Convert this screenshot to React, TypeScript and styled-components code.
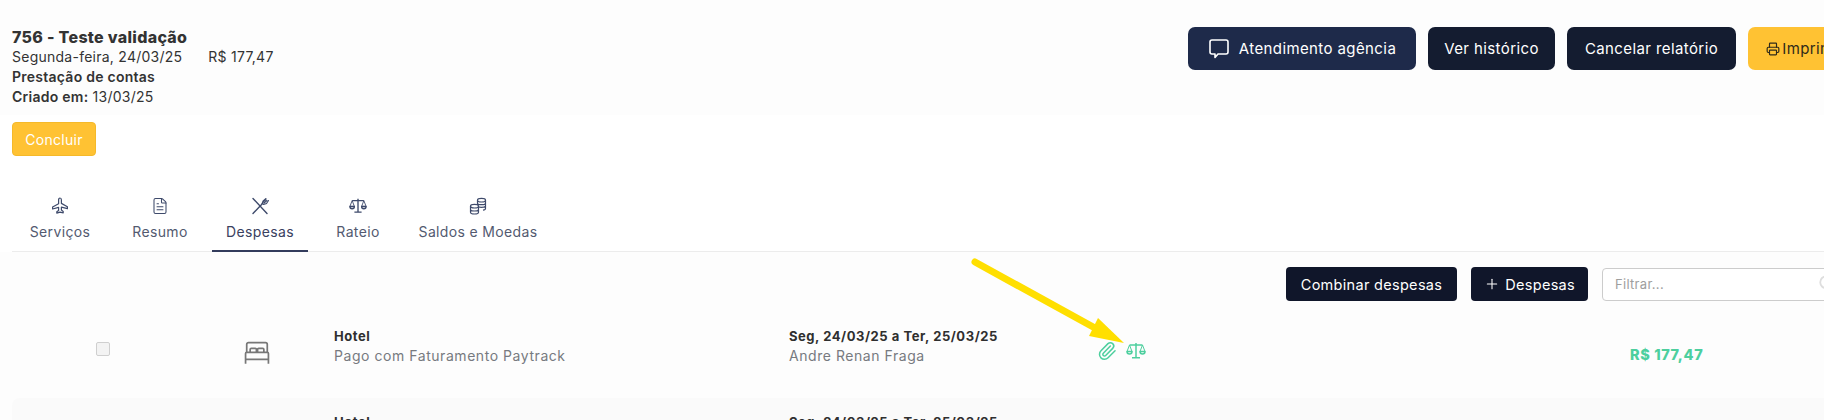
import { FileText, Paperclip, Plus, Printer, Search } from "lucide-react";
import styled, { createGlobalStyle } from "styled-components";

const GlobalStyle = createGlobalStyle`
  html, body {
    margin: 0;
    height: 420px;
    overflow: hidden;
    background: #ffffff;
    font-family: Inter, "Open Sans", sans-serif;
    color: #333333;
  }
`;

const Page = styled.div`
  position: relative;
  width: 1824px;
  height: 420px;
  overflow: hidden;
`;

const Header = styled.div`
  display: flex;
  justify-content: space-between;
  align-items: flex-start;
  height: 115px;
  padding: 27px 0 0 12px;
  box-sizing: border-box;
  background: #fdfdfd;
`;

const Title = styled.div`
  font-size: 16px;
  line-height: 20px;
  font-weight: 800;
  letter-spacing: 0.3px;
`;

const InfoLine = styled.div`
  display: flex;
  gap: 26px;
  font-size: 14px;
  line-height: 20px;
  letter-spacing: 0.25px;
`;

const Strong = styled.b`
  font-weight: 600;
`;

const Actions = styled.div`
  display: flex;
  gap: 12px;
  margin-right: -38px;
`;

const ActionButton = styled.button<{ $tone?: "navy" | "dark" | "yellow"; $width: number }>`
  display: flex;
  align-items: center;
  justify-content: center;
  gap: ${(p) => (p.$tone === "yellow" ? "2px" : "9px")};
  width: ${(p) => p.$width}px;
  height: 43px;
  padding: 0;
  border: 0;
  border-radius: 7px;
  font-family: inherit;
  font-size: 15px;
  letter-spacing: 0.4px;
  color: ${(p) => (p.$tone === "yellow" ? "#2f2a1a" : "#ffffff")};
  background: ${(p) =>
    p.$tone === "yellow" ? "#ffc233" : p.$tone === "navy" ? "#1e2a4a" : "#141c30"};
`;

const ConcludeBar = styled.div`
  padding: 7px 0 0 12px;
`;

const ConcludeButton = styled.button`
  width: 84px;
  height: 34px;
  border: 1px solid #f5b92a;
  border-radius: 4px;
  background: #ffc233;
  color: #ffffff;
  font-family: inherit;
  font-size: 14px;
  letter-spacing: 0.3px;
`;

const Tabs = styled.div`
  display: flex;
  height: 65px;
  margin: 30px 0 0 12px;
  border-bottom: 1px solid #ececec;
`;

const Tab = styled.div<{ $width: number; $active?: boolean }>`
  display: flex;
  flex-direction: column;
  align-items: center;
  width: ${(p) => p.$width}px;
  height: 66px;
  box-sizing: border-box;
  padding-top: 11px;
  font-size: 14px;
  line-height: 20px;
  letter-spacing: 0.35px;
  color: ${(p) => (p.$active ? "#3a4160" : "#535a70")};
  border-bottom: ${(p) => (p.$active ? "2px solid #333c5c" : "0")};
  svg {
    margin-bottom: 7px;
    color: #3e4a6b;
  }
`;

const Content = styled.div`
  height: 168px;
  background: #fdfdfd;
`;

const Toolbar = styled.div`
  display: flex;
  justify-content: flex-end;
  gap: 14px;
  margin-right: -17px;
  padding-top: 15px;
`;

const ToolButton = styled.button<{ $pad: number }>`
  display: flex;
  align-items: center;
  gap: 5px;
  height: 34px;
  padding: 0 ${(p) => p.$pad}px;
  border: 0;
  border-radius: 4px;
  background: #10162a;
  color: #ffffff;
  font-family: inherit;
  font-size: 14.5px;
  letter-spacing: 0.3px;
`;

const FilterBox = styled.div`
  position: relative;
  align-self: flex-end;
  width: 239px;
  height: 33px;
  box-sizing: border-box;
  padding-left: 12px;
  border: 1px solid #cccccc;
  border-radius: 4px;
  background: #ffffff;
  color: #9e9e9e;
  font-size: 13px;
  line-height: 31px;
  letter-spacing: 0.3px;
  svg {
    position: absolute;
    top: 5px;
    right: 4px;
    color: #dedede;
  }
`;

const RowList = styled.div`
  margin-top: 11px;
`;

const Row = styled.div<{ $shaded?: boolean }>`
  display: grid;
  grid-template-columns: ${(p) => (p.$shaded ? "194px" : "206px")} 102px 481px 308px 533px 1fr;
  height: 86px;
  margin-left: ${(p) => (p.$shaded ? "12px" : "0")};
  border-radius: 8px 0 0 8px;
  background: ${(p) => (p.$shaded ? "#fafafa" : "transparent")};
`;

const CheckCell = styled.div`
  display: flex;
  justify-content: center;
  align-items: center;
  padding-bottom: 12px;
`;

const CheckBox = styled.span`
  width: 12px;
  height: 12px;
  border: 1px solid #cfcfcf;
  border-radius: 2px;
  background: #f3f3f3;
`;

const BedCell = styled.div`
  display: flex;
  justify-content: center;
  align-items: center;
  padding-bottom: 4px;
  color: #777777;
`;

const TextCell = styled.div<{ $inset?: boolean }>`
  padding: 14px 0 0 ${(p) => (p.$inset ? "26px" : "0")};
`;

const RowTitle = styled.div`
  font-size: 13px;
  line-height: 20px;
  font-weight: 700;
  letter-spacing: 0.55px;
  color: #2f2f2f;
`;

const RowSub = styled.div`
  font-size: 14px;
  line-height: 20px;
  letter-spacing: 0.55px;
  color: #777a80;
`;

const StatusIcons = styled.div`
  display: flex;
  align-items: center;
  gap: 9px;
  padding-bottom: 8px;
  color: #4dcf9e;
`;

const Amount = styled.div`
  display: flex;
  align-items: center;
  padding-bottom: 2px;
  font-size: 14.5px;
  font-weight: 800;
  letter-spacing: 0.6px;
  color: #4dcf9e;
`;

// seta amarela desenhada por cima da tela
const ArrowOverlay = styled.svg`
  position: absolute;
  top: 255px;
  left: 965px;
`;

function ChatIcon() {
  return (
    <svg width="22" height="22" viewBox="0 0 22 22" fill="none" stroke="currentColor" strokeWidth="1.6" strokeLinejoin="round">
      <path d="M4 2h14a2 2 0 012 2v10a2 2 0 01-2 2h-8l-3 3.5V16H4a2 2 0 01-2-2V4a2 2 0 012-2z" />
    </svg>
  );
}

function PlaneIcon() {
  return (
    <svg width="18" height="18" viewBox="0 0 18 18" fill="none" stroke="currentColor" strokeWidth="1.2" strokeLinejoin="round">
      <path d="M9 1c.9 0 1.4 1 1.4 2v3.4l6 3.3v2l-6-1.6v3l1.8 1.3v1.4L9 15.2l-3.2.9v-1.4l1.8-1.3v-3l-6 1.6v-2l6-3.3V3C7.6 2 8.1 1 9 1z" />
    </svg>
  );
}

function CutleryIcon() {
  return (
    <svg width="18" height="18" viewBox="0 0 18 18" fill="none" stroke="currentColor" strokeWidth="1.4" strokeLinecap="round">
      <path d="M2 1.5l14 15" />
      <path d="M2 16.5L12 6" />
      <path d="M11 7l1-3 3-2.5M12.5 7.5l3-1 2-3M12 5l3-2.5M13 6l3-2.5" strokeWidth="1.1" />
    </svg>
  );
}

function ScaleIcon({ size }: { size: number }) {
  return (
    <svg width={size} height={size} viewBox="0 0 20 20" fill="none" stroke="currentColor" strokeWidth="1.5" strokeLinejoin="round">
      <path d="M10 2v14M6 16.8h8M3.5 4h13" />
      <path d="M3.5 4L1 10.5h5zM16.5 4L14 10.5h5z" strokeWidth="1" />
      <path d="M1 10.5a2.5 2.5 0 005 0zM14 10.5a2.5 2.5 0 005 0z" />
    </svg>
  );
}

function CoinsIcon() {
  return (
    <svg width="18" height="18" viewBox="0 0 18 18" fill="none" stroke="currentColor" strokeWidth="1.2">
      <ellipse cx="12.5" cy="3.2" rx="4" ry="1.8" />
      <path d="M8.5 3.2v7M16.5 3.2v8.2c0 .9-1 1.5-2.5 1.7M8.5 5.9c0 1 1.8 1.8 4 1.8s4-.8 4-1.8M8.5 8.6c0 1 1.8 1.8 4 1.8s4-.8 4-1.8" />
      <ellipse cx="5.5" cy="9.2" rx="4" ry="1.8" fill="#fff" />
      <path d="M1.5 9.2v6c0 1 1.8 1.8 4 1.8s4-.8 4-1.8v-6M1.5 12.2c0 1 1.8 1.8 4 1.8s4-.8 4-1.8" />
    </svg>
  );
}

function BedIcon() {
  return (
    <svg width="28" height="24" viewBox="0 0 24 21" fill="none" stroke="currentColor" strokeWidth="1.5" strokeLinejoin="round">
      <path d="M3 10V3a1.5 1.5 0 011.5-1.5h15A1.5 1.5 0 0121 3v7" />
      <path d="M6 10V7.5a1 1 0 011-1h3.5a1 1 0 011 1V10M12.5 10V7.5a1 1 0 011-1H17a1 1 0 011 1V10" />
      <path d="M2 11a1 1 0 011-1h18a1 1 0 011 1v5H2zM2 16v4M22 16v4" />
    </svg>
  );
}

export default function App() {
  return (
    <Page>
      <GlobalStyle />
      <Header>
        <div>
          <Title>756 - Teste validação</Title>
          <InfoLine>
            <span>Segunda-feira, 24/03/25</span>
            <span>R$ 177,47</span>
          </InfoLine>
          <InfoLine>
            <Strong>Prestação de contas</Strong>
          </InfoLine>
          <InfoLine>
            <span>
              <Strong>Criado em:</Strong> 13/03/25
            </span>
          </InfoLine>
        </div>
        <Actions>
          <ActionButton $tone="navy" $width={228}>
            <ChatIcon />
            Atendimento agência
          </ActionButton>
          <ActionButton $tone="dark" $width={127}>Ver histórico</ActionButton>
          <ActionButton $tone="dark" $width={169}>Cancelar relatório</ActionButton>
          <ActionButton $tone="yellow" $width={114}>
            <Printer size={14} />
            Imprimir
          </ActionButton>
        </Actions>
      </Header>
      <ConcludeBar>
        <ConcludeButton>Concluir</ConcludeButton>
      </ConcludeBar>
      <Tabs>
        <Tab $width={96}>
          <PlaneIcon />
          Serviços
        </Tab>
        <Tab $width={104}>
          <FileText size={18} strokeWidth={1.4} />
          Resumo
        </Tab>
        <Tab $width={96} $active>
          <CutleryIcon />
          Despesas
        </Tab>
        <Tab $width={100}>
          <ScaleIcon size={18} />
          Rateio
        </Tab>
        <Tab $width={140}>
          <CoinsIcon />
          Saldos e Moedas
        </Tab>
      </Tabs>
      <Content>
        <Toolbar>
          <ToolButton $pad={15}>Combinar despesas</ToolButton>
          <ToolButton $pad={13}>
            <Plus size={16} strokeWidth={1.6} />
            Despesas
          </ToolButton>
          <FilterBox>
            Filtrar...
            <Search size={18} strokeWidth={2.4} />
          </FilterBox>
        </Toolbar>
        <RowList>
          <Row>
            <CheckCell>
              <CheckBox />
            </CheckCell>
            <BedCell>
              <BedIcon />
            </BedCell>
            <TextCell $inset>
              <RowTitle>Hotel</RowTitle>
              <RowSub>Pago com Faturamento Paytrack</RowSub>
            </TextCell>
            <TextCell>
              <RowTitle>Seg, 24/03/25 a Ter, 25/03/25</RowTitle>
              <RowSub>Andre Renan Fraga</RowSub>
            </TextCell>
            <StatusIcons>
              <Paperclip size={20} strokeWidth={1.8} />
              <ScaleIcon size={20} />
            </StatusIcons>
            <Amount>R$ 177,47</Amount>
          </Row>
          <Row $shaded>
            <CheckCell />
            <BedCell />
            <TextCell $inset>
              <RowTitle>Hotel</RowTitle>
            </TextCell>
            <TextCell>
              <RowTitle>Seg, 24/03/25 a Ter, 25/03/25</RowTitle>
            </TextCell>
          </Row>
        </RowList>
      </Content>
      <ArrowOverlay width="170" height="100" viewBox="0 0 170 100">
        <path d="M10 7L130 73" stroke="#ffdf00" strokeWidth="7" strokeLinecap="round" />
        <path d="M159 88L124 81 133 63z" fill="#ffdf00" />
      </ArrowOverlay>
    </Page>
  );
}
